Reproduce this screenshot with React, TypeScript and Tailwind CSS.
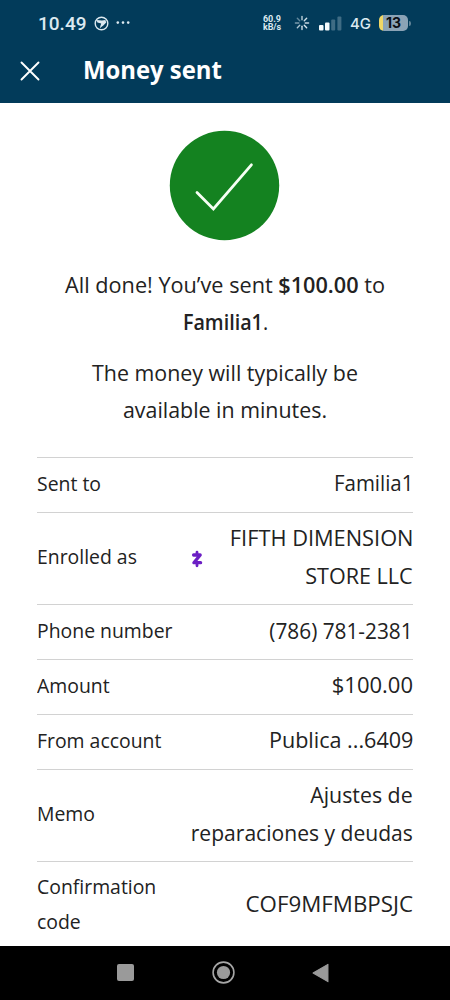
import type { ReactNode } from 'react';

function Spinner() {
  const spokes = [
    [0, 0.85], [45, 0.95], [90, 0.9], [135, 1], [180, 0.95], [225, 0.8], [270, 0.55], [315, 0.45],
  ];
  return (
    <svg className="ml-[11px] h-4 w-4" viewBox="-8 -8 16 16">
      {spokes.map(([angle, opacity]) => (
        <line key={angle} x1="0" y1="-3.2" x2="0" y2="-6.6" stroke="#dce9f0" strokeWidth="1.4" strokeLinecap="round" opacity={opacity} transform={`rotate(${angle})`} />
      ))}
    </svg>
  );
}

function StatusBar() {
  return (
    <div className="flex h-[46px] items-center pl-[38px] text-[#dce9f0]">
      <span className="w-[49px] font-['Roboto',sans-serif] text-[19px] leading-none font-medium">10.49</span>
      <svg className="ml-[7px] h-[15px] w-[15px]" viewBox="0 0 15 15" fill="none">
        <circle cx="7.5" cy="7.5" r="6.3" stroke="currentColor" strokeWidth="1.4" />
        <path d="M2.6 3.9 8 4.4 11.4 3.9 12.2 6.4 9.6 9.2 5.8 12.2 6.6 9.2 7.2 7.4 3.4 6.4Z" fill="currentColor" />
      </svg>
      <svg className="ml-[7px] h-[4px] w-[14px]" viewBox="0 0 14 4" fill="currentColor">
        <circle cx="1.8" cy="1.6" r="1.3" />
        <circle cx="7" cy="1.6" r="1.3" />
        <circle cx="12.2" cy="1.6" r="1.3" />
      </svg>
      <div className="ml-[133px] w-[20px] font-['Roboto',sans-serif] text-[9px] leading-[8px] font-bold tracking-[-0.1px]">
        <div>60.9</div>
        <div>kB/s</div>
      </div>
      <Spinner />
      <svg className="ml-[9px] h-[15px] w-[23px]" viewBox="0 0 23 15" fill="#f4fafc">
        <rect x="0" y="9" width="4.5" height="5.6" rx="1" />
        <rect x="6" y="6.4" width="4.5" height="8.2" rx="1" />
        <rect x="12.2" y="3.4" width="4" height="11.2" rx="1" fill="#3f6c84" />
        <rect x="18.4" y="0.6" width="4" height="14" rx="1" fill="#3f6c84" />
      </svg>
      <span className="ml-[8px] w-[21px] font-['Inter',sans-serif] text-[15px] leading-none font-medium">4G</span>
      <div className="ml-[8px] flex items-center gap-[1px]">
        <div className="flex h-[16px] w-[29px] items-center justify-center rounded-[5px] bg-linear-to-r from-[#f0d766] from-[13%] to-[#8ba3b6] to-[14%] font-['Inter',sans-serif] text-[14px] leading-none font-bold text-[#0a0f14]">13</div>
        <div className="h-[5px] w-[2px] rounded-r-full bg-[#5f8297]" />
      </div>
    </div>
  );
}

function Header() {
  return (
    <header className="h-[103px] shrink-0 bg-[#023b5a]">
      <StatusBar />
      <div className="flex h-[46px] items-center pl-[20px] text-white">
        <svg className="mt-[4px] h-5 w-5" viewBox="0 0 20 20" stroke="currentColor" strokeWidth="1.9" strokeLinecap="round">
          <path d="M1.5 1.5 18.5 18.5M18.5 1.5 1.5 18.5" />
        </svg>
        <h1 className="ml-[43px] origin-left scale-x-[0.955] text-[25px] leading-none font-bold">Money sent</h1>
      </div>
    </header>
  );
}

function Row({ label, icon, children }: { label: ReactNode; icon?: ReactNode; children: ReactNode }) {
  return (
    <div className="flex items-center justify-between border-t border-[#d2d2d2] pt-[6.3px] pb-[10.1px]">
      <div className="origin-left scale-x-[0.97] text-[20px] leading-[35px] whitespace-nowrap">{label}</div>
      {icon}
      <div className="flex flex-col items-end text-[22px] leading-[37.5px] whitespace-nowrap">{children}</div>
    </div>
  );
}

function ZelleMark() {
  return (
    <svg className="mt-[4px] mr-[25px] ml-auto h-[18px] w-[12px]" viewBox="0 0 12 18" fill="none" stroke="#6c1fc4" strokeLinecap="round" strokeLinejoin="round">
      <path d="M2.6 5H9.2L2.9 12.7H9.6" strokeWidth="3.3" />
      <path d="M6 2.2V4M6 14V15.8" strokeWidth="2.8" />
    </svg>
  );
}

function NavBar() {
  return (
    <nav className="flex h-[54.5px] shrink-0 items-center bg-black pl-[117px]">
      <div className="h-[17px] w-[17px] rounded-[2px] bg-[#9a9a9a]" />
      <svg className="ml-[78px] h-[23px] w-[23px]" viewBox="0 0 23 23" fill="none">
        <circle cx="11.5" cy="11.5" r="10.4" stroke="#a6a6a6" strokeWidth="1.6" />
        <circle cx="11.5" cy="11.5" r="6.6" fill="#9a9a9a" />
      </svg>
      <svg className="ml-[77px] h-[20px] w-[17px]" viewBox="0 0 16 20" preserveAspectRatio="none">
        <path d="M1 10 15 1.3V18.7Z" fill="#9a9a9a" stroke="#9a9a9a" strokeLinejoin="round" />
      </svg>
    </nav>
  );
}

export default function App() {
  return (
    <div className="flex h-[1000px] w-[450px] flex-col overflow-hidden bg-white font-['Open_Sans',sans-serif] text-[#222]">
      <Header />
      <main className="flex-1 overflow-hidden px-[37px] pt-[27px]">
        <svg className="ml-[132px] h-[111px] w-[111px]" viewBox="0 0 111 111">
          <circle cx="55.5" cy="55.5" r="54.7" fill="#148220" />
          <path d="M28 62.5 44.4 79 82.4 34.8" fill="none" stroke="#f6fff4" strokeWidth="2.8" strokeLinecap="round" />
        </svg>
        <div className="mt-[24.5px] text-center text-[22px] leading-[37.5px] whitespace-nowrap">
          <p className="scale-x-[0.985]">
            All done! You’ve sent <span className="font-semibold">$100.00</span> to
            <br />
            <span className="inline-block scale-x-[0.91]"><span className="font-semibold">Familia1</span>.</span>
          </p>
          <p className="mt-[13px] scale-x-[0.972]">
            The money will typically be
            <br />
            available in minutes.
          </p>
        </div>
        <div className="mt-[28.5px]">
          <Row label="Sent to"><span className="origin-right scale-x-[0.93]">Familia1</span></Row>
          <Row label="Enrolled as" icon={<ZelleMark />}>
            <span className="origin-right scale-x-[0.99]">FIFTH DIMENSION</span>
            <span className="origin-right scale-x-[0.98]">STORE LLC</span>
          </Row>
          <Row label="Phone number"><span className="origin-right scale-x-[0.945]">(786) 781-2381</span></Row>
          <Row label="Amount"><span>$100.00</span></Row>
          <Row label="From account"><span className="origin-right scale-x-[0.98]">Publica ...6409</span></Row>
          <Row label="Memo">
            <span className="origin-right scale-x-[0.97]">Ajustes de</span>
            <span className="origin-right scale-x-[0.958]">reparaciones y deudas</span>
          </Row>
          <Row label={<>Confirmation<br />code</>}><span className="origin-right scale-x-[1.015]">COF9MFMBPSJC</span></Row>
        </div>
      </main>
      <NavBar />
    </div>
  );
}
